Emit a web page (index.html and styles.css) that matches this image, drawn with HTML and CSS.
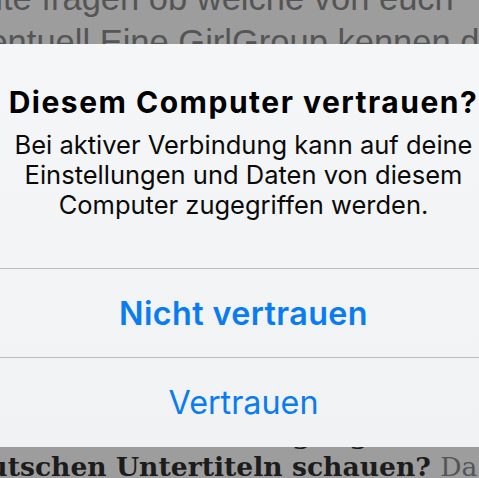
FILE: index.html
```html
<!DOCTYPE html>
<html lang="de">
<head>
    <meta charset="UTF-8">
    <meta name="viewport" content="width=device-width, initial-scale=1.0">
    <title>Diesem Computer vertrauen?</title>
    <link rel="stylesheet" href="styles.css">
</head>
<body>

    <div class="page">
        <div class="article">
            <div class="line line-one">Ich wollte fragen ob welche von euch</div>
            <div class="line line-two">eventuell Eine GirlGroup kennen die</div>
            <div class="spacer"></div>
            <div class="line slab line-three">Serien und Filme mit Hangul gibt</div>
            <div class="line slab line-four">mit deutschen Untertiteln schauen? <span class="plain">Da</span></div>
        </div>

        <div class="alert">
            <div class="alert-body">
                <h2 class="alert-title">Diesem Computer vertrauen?</h2>
                <p class="alert-message">Bei aktiver Verbindung kann auf deine<br>Einstellungen und Daten von diesem<br>Computer zugegriffen werden.</p>
            </div>
            <button type="button" class="alert-btn strong">Nicht vertrauen</button>
            <button type="button" class="alert-btn">Vertrauen</button>
        </div>
    </div>

</body>
</html>
```
FILE: styles.css
```css
html, body {
    margin: 0;
    padding: 0;
    height: 100%;
    overflow: hidden;
}

body {
    background: #9d9d9d;
    font-family: Inter, "Noto Sans", sans-serif;
}

.page {
    position: relative;
    display: flow-root;
    height: 100%;
}

.article {
    margin-top: -24px;
    color: #555;
    font-family: "Liberation Sans", Arial, sans-serif;
    font-size: 34.5px;
}

.line {
    white-space: nowrap;
    line-height: 44px;
}

.line-one {
    margin-left: -112px;
}

.line-two {
    margin-left: -48px;
}

.spacer {
    height: 355px;
}

.slab {
    font-family: "DejaVu Serif", serif;
    font-weight: bold;
    font-size: 26.6px;
    line-height: 32px;
    color: #1c1c1c;
}

.line-three {
    margin-left: -95px;
}

.line-four {
    margin-left: -107px;
}

.plain {
    font-weight: normal;
    color: #555;
}

/* the alert sits over the article */
.alert {
    position: absolute;
    top: 44px;
    left: -12px;
    width: 511px;
    background: linear-gradient(to bottom, #f5f6f7, #f1f2f3);
    display: flex;
    flex-direction: column;
    text-align: center;
}

.alert-body {
    padding: 40px 16px 48px;
    border-bottom: 1px solid #bcbdbf;
}

.alert-title {
    margin: 0;
    font-size: 30px;
    line-height: 36px;
    font-weight: 700;
    letter-spacing: 1.5px;
    color: #000;
}

.alert-message {
    margin: 10px 0 0;
    font-size: 25.5px;
    line-height: 30px;
    color: #0a0a0a;
}

.alert-btn {
    height: 89px;
    border: none;
    background: none;
    font-family: inherit;
    font-size: 32.3px;
    color: #0a7cf2;
    padding: 0;
}

.alert-btn.strong {
    font-weight: 600;
    letter-spacing: 0.4px;
    border-bottom: 1px solid #bcbdbf;
}
```
